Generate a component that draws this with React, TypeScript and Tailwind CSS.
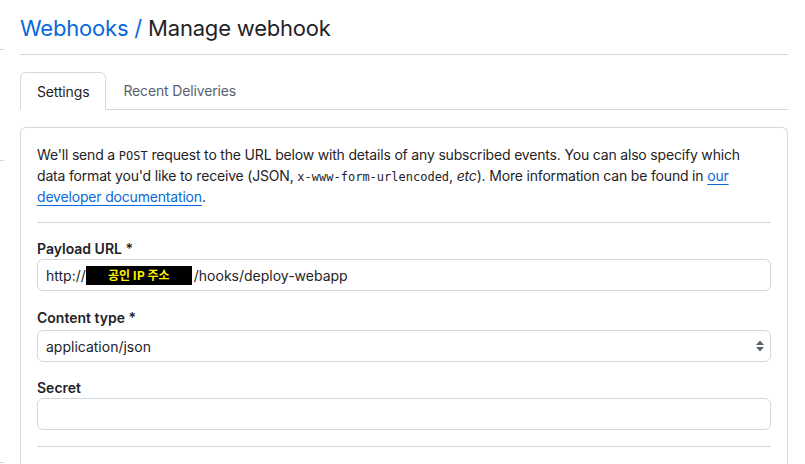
import React from "react";

const font = { fontFamily: "Inter, 'Noto Sans CJK KR', sans-serif" };
const mono = { fontFamily: "'DejaVu Sans Mono', monospace" };

function SelectArrows() {
  return (
    <svg width="10" height="14" viewBox="0 0 10 14" className="shrink-0">
      <path d="M5 1.5 L9 6 H1 Z" fill="#59636e" />
      <path d="M5 12.5 L9 8 H1 Z" fill="#59636e" />
    </svg>
  );
}

export default function App() {
  return (
    <div className="flex w-[805px] h-[464px] overflow-hidden bg-white text-[#1f2328]" style={font}>
      <div className="w-[4px] shrink-0 flex flex-col">
        <div className="h-[49px]" />
        <div className="h-px bg-[#d1d9e0]" />
        <div className="h-[110px]" />
        <div className="h-px bg-[#d1d9e0]" />
        <div className="h-[301px]" />
        <div className="h-px bg-[#d1d9e0]" />
      </div>
      <div className="flex-1 pl-[16px] pr-[17px] flex flex-col">
        <div className="pt-[10px] pb-[8px] border-b border-[#d1d9e0] text-[22px] leading-[36px] tracking-[-0.2px]">
          <span className="text-[#0969da]">Webhooks /</span> <span>Manage webhook</span>
        </div>
        <div className="mt-[17px] flex border-b border-[#d1d9e0] text-[14px] tracking-[-0.15px]">
          <div className="-mb-px px-4 h-[38px] flex items-center rounded-t-md border border-[#d1d9e0] border-b-white bg-white text-[#1f2328]">
            Settings
          </div>
          <div className="px-[17px] h-[37px] flex items-center text-[#59636e]">Recent Deliveries</div>
        </div>
        <div className="mt-[17px] flex-1 rounded-t-md border border-b-0 border-[#d1d9e0] px-4 pt-4">
          <p className="text-[14px] leading-[21px] tracking-[-0.18px]">
            We'll send a{" "}
            <code className="text-[12px] leading-[0] tracking-normal" style={mono}>POST</code>{" "}
            request to the URL below with details of any subscribed events. You can also specify which
            <br />
            data format you'd like to receive (JSON,{" "}
            <code className="text-[12px] leading-[0] tracking-normal" style={mono}>x-www-form-urlencoded</code>,{" "}
            <em>etc</em>). More information can be found in{" "}
            <span className="text-[#0969da] underline underline-offset-[3px]">our</span>
            <br />
            <span className="text-[#0969da] underline underline-offset-[3px]">developer documentation</span>.
          </p>
          <div className="mt-[15px] h-px bg-[#d1d9e0]" />
          <div className="mt-[15px]">
            <div className="text-[14px] leading-[21px] font-semibold">Payload URL *</div>
            <div className="h-[32px] rounded-md border border-[#d1d9e0] px-2 flex items-center text-[14px]">
              <span>http://</span>
              <span className="inline-flex items-center justify-center w-[106px] h-[19px] bg-black text-[#fff200] text-[12px] font-bold" style={{ fontFamily: "'Noto Sans CJK KR', sans-serif" }}>
                공인 IP 주소
              </span>
              <span className="ml-[2px]">/hooks/deploy-webapp</span>
            </div>
          </div>
          <div className="mt-[16px]">
            <div className="text-[14px] leading-[21px] font-semibold">Content type *</div>
            <div className="mt-[2px] h-[32px] rounded-md border border-[#d1d9e0] pl-2 pr-[5px] flex items-center justify-between text-[14px]">
              <span>application/json</span>
              <SelectArrows />
            </div>
          </div>
          <div className="mt-[15px]">
            <div className="text-[14px] leading-[21px] font-semibold">Secret</div>
            <div className="h-[32px] rounded-md border border-[#d1d9e0]" />
          </div>
          <div className="mt-[16px] h-px bg-[#d1d9e0]" />
        </div>
      </div>
    </div>
  );
}
